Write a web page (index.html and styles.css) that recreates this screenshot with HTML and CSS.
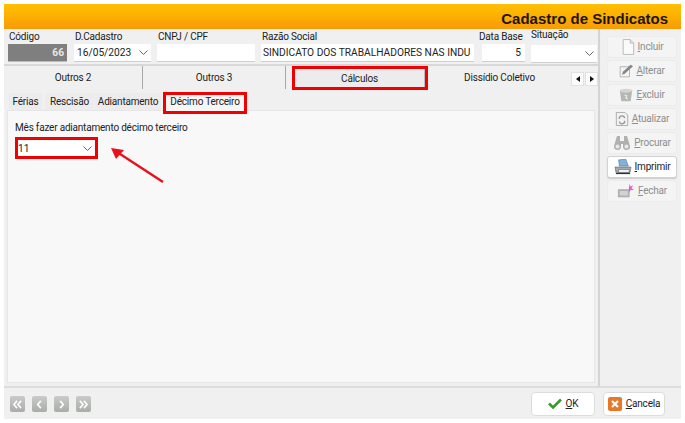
FILE: index.html
```html
<!DOCTYPE html>
<html lang="pt">
<head>
<meta charset="utf-8">
<title>Cadastro de Sindicatos</title>
<link rel="stylesheet" href="styles.css">
</head>
<body>
<div class="window">
  <header class="titlebar"><h1 class="title">Cadastro de Sindicatos</h1></header>
  <div class="middle">
    <main class="main">
      <section class="fields">
        <div class="field f-codigo"><label class="lbl">Código</label><div class="input code">66</div></div>
        <div class="field f-data"><label class="lbl">D.Cadastro</label><div class="input combo"><span>16/05/2023</span><svg class="chev" viewBox="0 0 9 5"><path d="M.5.5 4.5 4.5 8.5.5"/></svg></div></div>
        <div class="field f-cnpj"><label class="lbl">CNPJ / CPF</label><div class="input"></div></div>
        <div class="field f-razao"><label class="lbl">Razão Social</label><div class="input clip">SINDICATO DOS TRABALHADORES NAS INDU</div></div>
        <div class="field f-base"><label class="lbl lbl-base">Data Base</label><div class="input right">5</div></div>
        <div class="field f-sit"><label class="lbl lbl-up">Situação</label><div class="input combo tall"><span></span><svg class="chev" viewBox="0 0 9 5"><path d="M.5.5 4.5 4.5 8.5.5"/></svg></div></div>
      </section>
      <nav class="tabs">
        <div class="tab t-1">Outros 2</div>
        <div class="tab t-2">Outros 3</div>
        <div class="tab t-3 active"><span class="tab-inner">Cálculos</span></div>
        <div class="tab t-4">Dissídio Coletivo</div>
        <div class="scroller">
          <span class="sbtn"><svg viewBox="0 0 4 6"><path d="M4 0v6L0 3z"/></svg></span>
          <span class="sbtn"><svg viewBox="0 0 4 6"><path d="M0 0v6l4-3z"/></svg></span>
        </div>
      </nav>
      <nav class="subtabs">
        <span class="sub s-1">Férias</span>
        <span class="sub s-2">Rescisão</span>
        <span class="sub s-3">Adiantamento</span>
        <span class="sub s-4">Décimo Terceiro</span>
      </nav>
      <section class="panel">
        <div class="lbl panel-lbl">Mês fazer adiantamento décimo terceiro</div>
        <div class="month"><span>11</span><svg class="chev" viewBox="0 0 9 5"><path d="M.5.5 4.5 4.5 8.5.5"/></svg></div>
      </section>
    </main>
    <aside class="side">
      <button class="act"><svg class="ico" viewBox="0 0 16 18"><path d="M2.500.5h8l4 4v13h-12z" fill="#fafafa" stroke="#b5b5b5"/><path d="M10.500.5v4h4" fill="#e2e2e2" stroke="#b5b5b5"/></svg><span><u>I</u>ncluir</span></button>
      <button class="act"><svg class="ico" viewBox="0 0 18 18"><path d="M1.500 3.500h12v13h-12z" fill="#f4f4f4" stroke="#a5a5a5"/><path d="M4 14l1-4L15 1l3 2-10 9z" fill="#858585"/></svg><span><u>A</u>lterar</span></button>
      <button class="act"><svg class="ico" viewBox="0 0 18 18"><path d="M1 3h16l-2 14H3z" fill="#b4b8b4"/><ellipse cx="9" cy="3.500" rx="8" ry="2.500" fill="#d2d5d2"/><path d="M7 9l3 1-1 3 2 1" fill="none" stroke="#eee" stroke-width="1.500"/></svg><span><u>E</u>xcluir</span></button>
      <button class="act"><svg class="ico" viewBox="0 0 16 18"><path d="M1.500 1.500h10l3 3v12h-13z" fill="#f2f2f2" stroke="#a5a5a5"/><path d="M5 9a3 3 0 0 1 6-1M11 11a3 3 0 0 1-6 1" fill="none" stroke="#999" stroke-width="1.500"/></svg><span><u>A</u>tualizar</span></button>
      <button class="act"><svg class="ico wide" viewBox="0 0 18 16"><path d="M4 1h3v5h4V1h3l3 10a3.500 3.500 0 0 1-7 1V9H8v3a3.500 3.500 0 0 1-7-1z" fill="#b0b0b0"/><circle cx="4.500" cy="11.500" r="2" fill="#e8e8e8"/><circle cx="13.500" cy="11.500" r="2" fill="#e8e8e8"/></svg><span><u>P</u>rocurar</span></button>
      <button class="act on"><svg class="ico wide" viewBox="0 0 20 18"><path d="M5 1l8-1 3 8H6z" fill="#7fb2dc" stroke="#3f6f9f" stroke-width=".6"/><path d="M1 9h18l-1 6H2z" fill="#a4aaae" stroke="#555" stroke-width=".6"/><path d="M5 12h12v3H5z" fill="#fff" stroke="#555" stroke-width=".6"/><path d="M2 15.500h16V17H2z" fill="#333"/></svg><span><u>I</u>mprimir</span></button>
      <button class="act"><svg class="ico wide" viewBox="0 0 20 16"><path d="M1 6h13v9H1z" fill="#b0b0b0"/><path d="M3 8h9v5H3z" fill="#d2d2d2"/><path d="M14 0l1 3 3-1-2 3 3 2-4 0-1 3-1-4z" fill="#e85bc8"/></svg><span><u>F</u>echar</span></button>
    </aside>
  </div>
  <footer class="bottom">
    <div class="nav">
      <span class="navb"><svg viewBox="0 0 12 10"><path d="M5.500 1 2 5l3.500 4M10 1 6.500 5 10 9"/></svg></span>
      <span class="navb"><svg viewBox="0 0 12 10"><path d="M7.500 1 4 5l3.500 4"/></svg></span>
      <span class="navb"><svg viewBox="0 0 12 10"><path d="M4.500 1 8 5 4.500 9"/></svg></span>
      <span class="navb"><svg viewBox="0 0 12 10"><path d="M2 1l3.500 4L2 9M6.500 1 10 5 6.500 9"/></svg></span>
    </div>
    <div class="confirm">
      <button class="big ok"><svg class="big-ico" viewBox="0 0 14 11"><path d="M1 5.500 5 9.500 13 1.500" fill="none" stroke="#3a9a2e" stroke-width="2.600"/></svg><span><u>O</u>K</span></button>
      <button class="big cancel"><svg class="big-ico sq" viewBox="0 0 14 14"><rect width="14" height="14" rx="2" fill="#e8772a"/><path d="M4 4l6 6M10 4l-6 6" stroke="#fff" stroke-width="2.200"/></svg><span><u>C</u>ancela</span></button>
    </div>
  </footer>
  <svg class="pointer" viewBox="0 0 60 40"><path d="M52 34 6 4" stroke="#e8101c" stroke-width="2.400" fill="none"/><path d="M0 0 13 2 5 11z" fill="#e8101c"/></svg>
</div>
</body>
</html>
```
FILE: styles.css
```css
* { box-sizing: border-box; }
html, body { margin: 0; padding: 0; }
body {
  width: 685px; height: 423px; background: #fff; overflow: hidden;
  font-family: Roboto, "Liberation Sans", Arial, sans-serif; font-size: 10px; letter-spacing: -.2px; color: #222;
}
.window {
  position: relative; width: 677px; height: 415px; margin: 4px;
  background: #f0f0f0; display: flex; flex-direction: column;
}
.titlebar {
  height: 25px; flex: none; display: flex; justify-content: flex-end; align-items: center;
  padding: 3px 13px 0 0;
  background: linear-gradient(#ffc000, #fdb100 45%, #f79a0a);
}
.title { margin: 0; font-size: 15px; font-weight: 700; color: #1c1400; font-family: "Liberation Sans", Arial, sans-serif; letter-spacing: 0; }
.middle { flex: none; height: 359px; display: flex; border-bottom: 2px solid #dcdcdc; }
.main { width: 596px; flex: none; border-right: 2px solid #d4d4d4; display: flex; flex-direction: column; }
.side { flex: 1; display: flex; flex-direction: column; gap: 2.500px; padding: 7px 4px 0 7px; }

.fields { height: 37px; flex: none; display: flex; padding: 1px 0 0 4px; border-bottom: 2px solid #d8d8d8; }
.field { display: flex; flex-direction: column; flex: none; }
.lbl { display: block; height: 14px; line-height: 13px; white-space: nowrap; padding-left: 1px; }
.lbl-up { margin-top: -2px; margin-bottom: 2px; padding-left: 0; }
.lbl-base { margin-left: -3px; padding-left: 0; }
.input {
  height: 18px; background: #fff; border-bottom: 1px solid #cfcfcf; padding: 0 3px;
  line-height: 17px; font-size: 10.200px; letter-spacing: 0; white-space: nowrap; overflow: hidden;
  display: flex; align-items: center; justify-content: space-between;
}
.clip { display: block; padding: 0 2px; }
.code { background: #7f7f7f; color: #e8e8e8; font-weight: 700; justify-content: flex-end; border: 0; border-bottom: 1px solid #bbb; }
.right { justify-content: flex-end; padding-right: 4px; }
.tall { margin-top: 1px; }
.f-codigo { width: 59px; margin-right: 7px; }
.f-data { width: 77px; margin-right: 6px; }
.f-cnpj { width: 98px; margin-right: 6px; }
.f-razao { width: 213px; margin-right: 8px; }
.f-base { width: 43px; margin-right: 6px; }
.f-sit { width: 66px; }
.chev { width: 9px; height: 5px; fill: none; stroke: #666; stroke-width: 1; flex: none; }

.tabs { height: 26px; flex: none; display: flex; align-items: center; position: relative; }
.tab { height: 23px; display: flex; align-items: center; justify-content: center; flex: none; margin-top: -3px; }
.t-1 { width: 139px; border-right: 1px solid #a8a8a8; }
.t-2 { width: 143px; border-right: 1px solid #a8a8a8; }
.t-3 { width: 136px; margin-left: 6px; margin-top: -2px; border: 3px solid #f00000; padding: 0; height: 24px; }
.tab-inner { width: 100%; height: 100%; display: flex; align-items: center; justify-content: center; background: #ececec; border-right: 1px solid #bdbdbd; }
.t-4 { width: 143px; }
.scroller { display: flex; gap: 1px; position: absolute; left: 567px; top: 6px; }
.sbtn { width: 13px; height: 14px; background: #fbfbfb; border: 1px solid #e2e2e2; display: flex; align-items: center; justify-content: center; }
.sbtn svg { width: 4px; height: 6px; fill: #111; }

.subtabs { height: 18px; flex: none; display: flex; align-items: flex-end; position: relative; padding-left: 5px; }
.sub { height: 17px; line-height: 17px; text-align: center; background: #ececec; flex: none; }
.s-1 { width: 33px; margin-right: 3px; }
.s-2 { width: 49px; margin-right: 1px; }
.s-3 { width: 66px; margin-right: 2px; }
.s-4 {
  width: 84px; height: 22px; line-height: 14px; align-self: flex-start;
  background: #f6f6f6; border: 3px solid #f00000; position: relative; z-index: 1;
}
.panel { flex: 1; margin: 0 3px 3px 3px; background: #f8f8f8; border: 1px solid #e6e6e6; padding: 10px 0 0 7px; }
.panel-lbl { padding-left: 0; height: 13px; }
.month {
  width: 83px; height: 22px; margin-top: 3px; background: #fff; border: 3px solid #f00000;
  display: flex; align-items: center; justify-content: space-between; padding: 0 3px 0 0; font-size: 10.200px; letter-spacing: 0;
}

.act {
  height: 21.500px; padding: 0; border: 1px solid #ececec; border-radius: 3px; background: #f4f4f4;
  font: inherit; letter-spacing: inherit; color: #8e8e8e; display: flex; align-items: center; justify-content: center; gap: 3px;
}
.act.on { background: #fff; color: #222; border-color: #d2d2d2; box-shadow: 0 1px 1px #ccc; }
.ico { width: 14px; height: 16px; flex: none; }
.ico.wide { width: 18px; }

.bottom { flex: 1; display: flex; justify-content: space-between; align-items: center; padding: 0 16px 0 6px; }
.nav { display: flex; gap: 7px; margin-top: 1px; }
.navb { width: 15px; height: 16px; border-radius: 2px; background: linear-gradient(#c8cbc8, #a9aca9); display: flex; align-items: center; justify-content: center; }
.navb svg { width: 11px; height: 9px; fill: none; stroke: #fff; stroke-width: 1.800; }
.confirm { display: flex; gap: 8px; }
.big {
  height: 24px; padding: 0; background: #fff; border: 1px solid #dcdcdc; border-radius: 4px;
  font: inherit; letter-spacing: inherit; color: #222; display: flex; align-items: center; justify-content: center; gap: 4px;
}
.ok { width: 64px; }
.cancel { width: 62px; }
.big-ico { width: 14px; height: 11px; flex: none; }
.big-ico.sq { height: 14px; }

.pointer { position: absolute; left: 107px; top: 144px; width: 60px; height: 40px; overflow: visible; }
```
